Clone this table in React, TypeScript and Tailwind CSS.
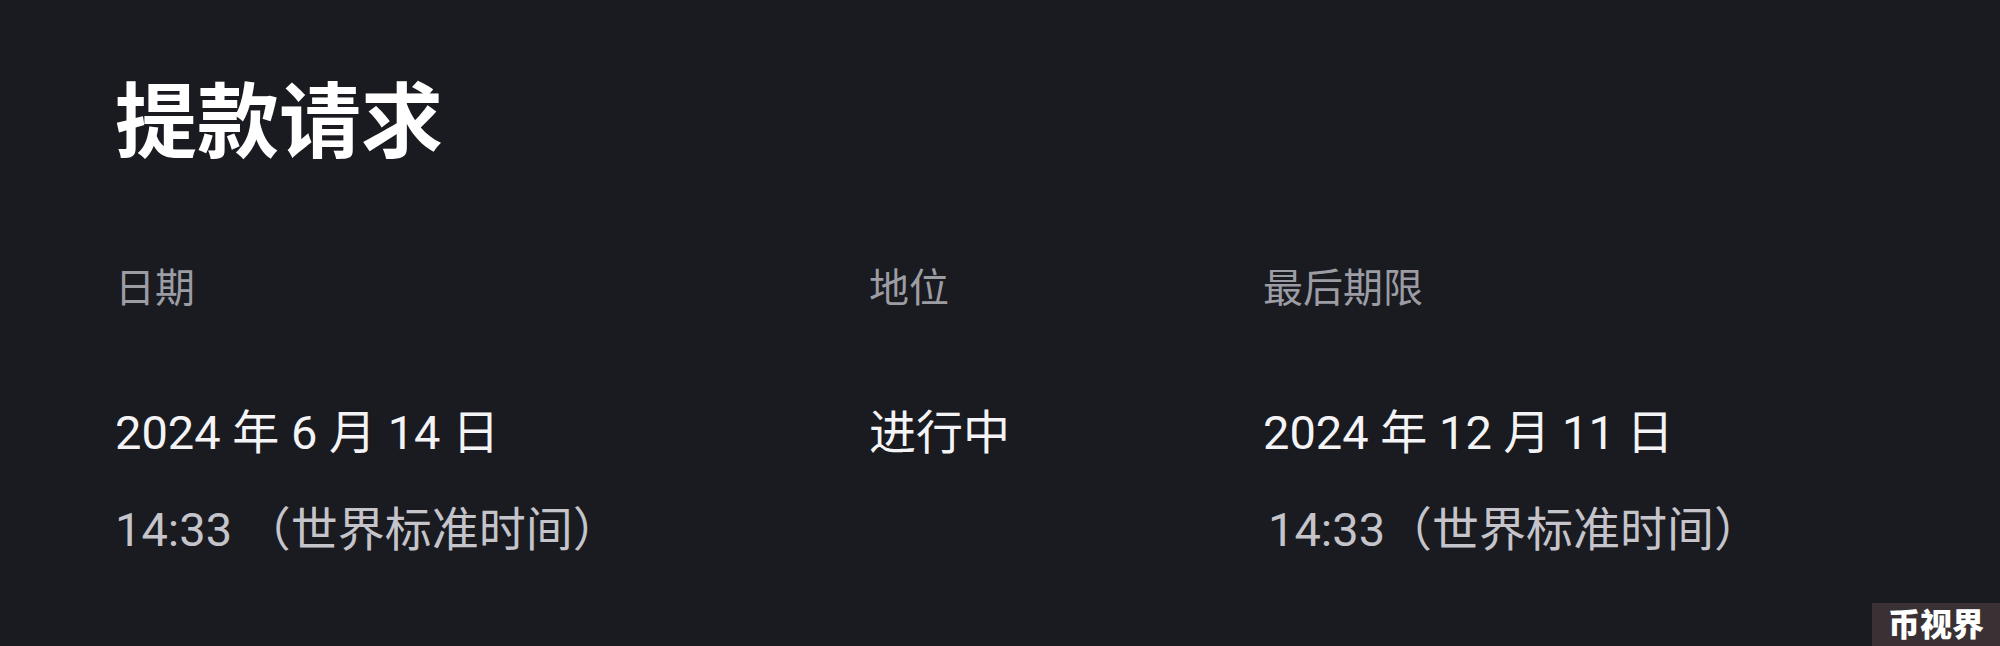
export default function App() {
  const font = { fontFamily: 'Roboto, "Noto Sans CJK SC", sans-serif' }

  return (
    <div
      className="relative w-[2000px] h-[646px] overflow-hidden bg-[#1a1b20] pl-[115px] pt-[70px]"
      style={font}
    >
      <h1 className="text-[82px] font-bold leading-[1.3] text-white">提款请求</h1>

      <div className="mt-[92px] grid grid-cols-[754px_394px_1fr] text-[40px] leading-none text-[#9c9da4]">
        <div>日期</div>
        <div>地位</div>
        <div>最后期限</div>
      </div>

      <div className="mt-[100px] grid grid-cols-[754px_394px_1fr]">
        <div className="flex flex-col gap-[50px]">
          <div className="text-[47px] leading-none text-[#f4f4f6]">2024 年 6 月 14 日</div>
          <div className="text-[47px] leading-none text-[#c4c4ca]">14:33 （世界标准时间）</div>
        </div>
        <div className="text-[47px] leading-none text-[#f4f4f6]">进行中</div>
        <div className="flex flex-col gap-[50px]">
          <div className="text-[47px] leading-none text-[#f4f4f6]">2024 年 12 月 11 日</div>
          <div className="pl-[5px] text-[47px] leading-none text-[#c4c4ca]">14:33（世界标准时间）</div>
        </div>
      </div>

      <div className="absolute bottom-0 right-0 flex h-[43px] w-[128px] items-start justify-center bg-[#3a3134] pt-[6px]">
        <span className="text-[32px] font-black leading-none text-white">币视界</span>
      </div>
    </div>
  )
}
